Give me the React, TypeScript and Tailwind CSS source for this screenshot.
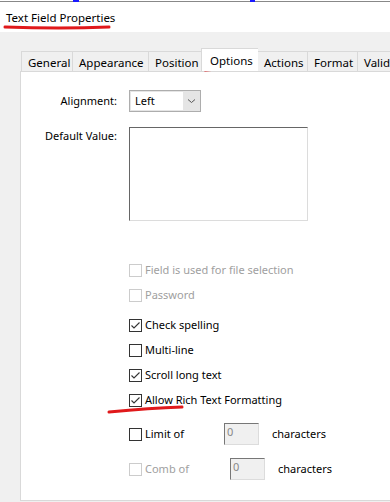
import React from 'react';

const font = { fontFamily: '"Noto Sans", "Open Sans", sans-serif' };

function Box({ checked, disabled }: { checked?: boolean; disabled?: boolean }) {
  return (
    <span
      className={`flex h-[13px] w-[13px] shrink-0 items-center justify-center border bg-white ${
        disabled ? 'border-[#cccccc]' : 'border-[#333333]'
      }`}
    >
      {checked && (
        <svg width="11" height="11" viewBox="0 0 11 11">
          <path d="M1.5 5.5 L4 8 L9.5 2.5" fill="none" stroke="#333" strokeWidth="1.1" />
        </svg>
      )}
    </span>
  );
}

function Check({ label, checked, disabled }: { label: string; checked?: boolean; disabled?: boolean }) {
  return (
    <div className="flex h-[25px] items-center gap-[3px]">
      <Box checked={checked} disabled={disabled} />
      <span className={disabled ? 'text-[#a0a0a0]' : 'text-black'}>{label}</span>
    </div>
  );
}

function NumBox() {
  return (
    <div className="flex h-[22px] w-[35px] items-start border border-t-[#777] border-l-[#777] border-r-[#dcdcdc] border-b-[#dcdcdc] bg-[#f0f0f0] pl-[2px] text-[#888]">
      0
    </div>
  );
}

const tabs = ['General', 'Appearance', 'Position', 'Options', 'Actions', 'Format', 'Validate'];
const tabW = [51, 76, 53, 57, 50, 50, 60];

export default function App() {
  return (
    <div className="relative h-[502px] w-[390px] overflow-hidden bg-[#f0f0f0] text-[11px] text-black" style={font}>
      {/* title bar */}
      <div className="relative h-[32px] bg-white">
        <div className="h-[2px] border-b border-[#888] bg-white" />
        <div className="absolute left-[73px] top-0 h-[2px] w-[6px] bg-[#1a1aff]" />
        <div className="absolute left-[250px] top-0 h-[2px] w-[5px] bg-[#1a1aff]" />
        <div className="pl-[6px] pt-[8px] text-[11.5px] leading-[16px]">Text Field Properties</div>
      </div>

      {/* tabs */}
      <div className="flex h-[39px] items-end pl-[21px]">
        {tabs.map((t, i) => {
          const active = t === 'Options';
          return (
            <div
              key={t}
              style={{ width: tabW[i] }}
              className={`shrink-0 overflow-hidden whitespace-nowrap border border-r-0 border-b-0 border-[#d9d9d9] ${
                active
                  ? 'relative z-10 -mr-[1px] h-[23px] bg-white pl-[8px] pt-[3px] text-[11.5px]'
                  : 'h-[20px] bg-[#f0f0f0] pl-[6px] pt-[2px] text-[11.5px]'
              }`}
            >
              {t}
            </div>
          );
        })}
      </div>

      {/* panel */}
      <div className="ml-[20px] h-[430px] border border-r-0 border-[#d9d9d9] bg-white">
        <div className="flex items-center pt-[18px]">
          <div className="w-[97px] pr-[1px] text-right">Alignment:</div>
          <div className="ml-[11px] flex h-[22px] w-[72px] items-center border border-[#adadad] bg-[#e5e5e5] p-[1px]">
            <div className="flex h-full w-[52px] items-center bg-white pl-[4px]">Left</div>
            <svg className="ml-[4px]" width="9" height="6" viewBox="0 0 9 6">
              <path d="M1 1.5 L4.5 4.5 L8 1.5" fill="none" stroke="#555" strokeWidth="1" />
            </svg>
          </div>
        </div>

        <div className="mt-[15px] flex items-start">
          <div className="w-[97px] pr-[1px] pt-[1px] text-right">Default Value:</div>
          <div className="ml-[11px] h-[94px] w-[179px] border border-t-[#666] border-l-[#666] border-r-[#dcdcdc] border-b-[#dcdcdc] bg-white" />
        </div>

        <div className="ml-[108px] mt-[37px] flex flex-col">
          <Check label="Field is used for file selection" disabled />
          <Check label="Password" disabled />
          <div className="h-[5px]" />
          <Check label="Check spelling" checked />
          <Check label="Multi-line" />
          <Check label="Scroll long text" checked />
          <Check label="Allow Rich Text Formatting" checked />
          <div className="mt-[9px] flex h-[24px] items-center">
            <Box />
            <span className="ml-[3px] w-[79px]">Limit of</span>
            <NumBox />
            <span className="ml-[13px]">characters</span>
          </div>
          <div className="mt-[11px] flex h-[24px] items-center">
            <Box disabled />
            <span className="ml-[3px] w-[85px] text-[#a0a0a0]">Comb of</span>
            <NumBox />
            <span className="ml-[13px]">characters</span>
          </div>
        </div>
      </div>

      {/* red annotation strokes */}
      <svg className="pointer-events-none absolute left-0 top-0" width="390" height="502">
        <path d="M5 27 Q 60 29 109 27" fill="none" stroke="#e0191b" strokeWidth="3" strokeLinecap="round" />
        <path d="M205 70 Q 230 68 256 66" fill="none" stroke="#e0191b" strokeWidth="3" strokeLinecap="round" />
        <path d="M109 412 Q 150 408 182 407" fill="none" stroke="#e0191b" strokeWidth="3" strokeLinecap="round" />
      </svg>
    </div>
  );
}
